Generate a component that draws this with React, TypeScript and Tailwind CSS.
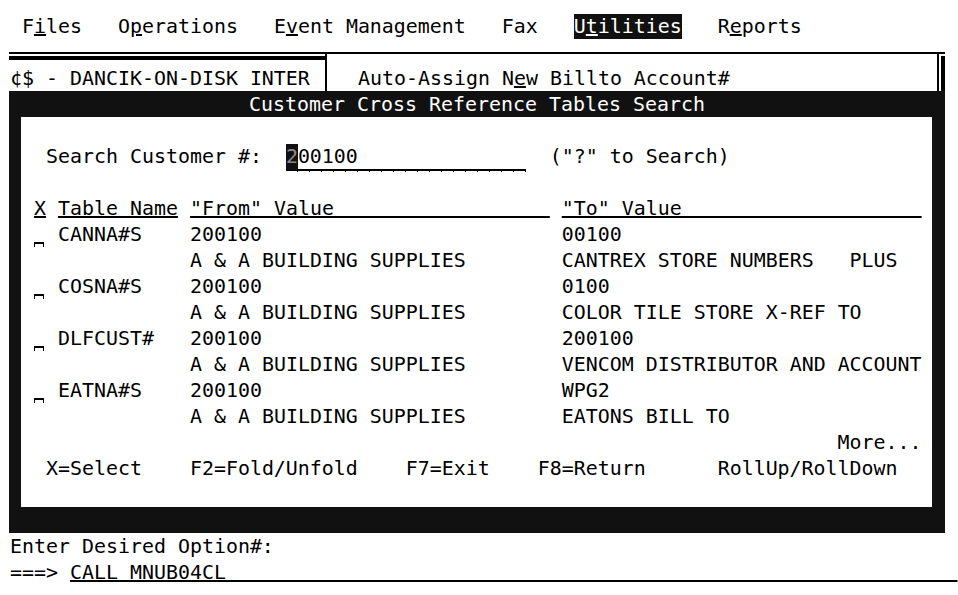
import React from "react"

const mono = "font-['DejaVu_Sans_Mono',monospace] text-[19.93px] leading-[26px] whitespace-pre"

function U({ children }: { children: React.ReactNode }) {
  return <span className="underline decoration-2 underline-offset-[1px]">{children}</span>
}

function Row({ children, className = "" }: { children?: React.ReactNode; className?: string }) {
  return <div className={`h-[26px] pt-[1px] ${className}`}>{children}</div>
}

// one-character input slot: a short line with tick ends
function Slot() {
  return (
    <span className="relative inline-block w-[12px] h-[25px] align-top">
      <span className="absolute left-0 top-[20px] w-[10px] h-[5px] border-t-2 border-x border-black" />
    </span>
  )
}

// search field with underline and tick marks
function SearchField() {
  return (
    <span className="relative inline-block w-[240px] h-[27px] align-top border-b-2 border-black">
      <span className="inline-block bg-[#111] text-[#8c8c8c] h-[26px]">2</span>
      00100
      <span className="absolute left-0 top-full flex">
        {Array.from({ length: 20 }).map((_, i) => (
          <span key={i} className="w-[12px] h-[3px] border-r border-black" />
        ))}
      </span>
    </span>
  )
}

const rows = [
  { tbl: "CANNA#S", from: "200100", to: "00100" },
  { tbl: "", from: "A & A BUILDING SUPPLIES", to: "CANTREX STORE NUMBERS   PLUS" },
  { tbl: "COSNA#S", from: "200100", to: "0100" },
  { tbl: "", from: "A & A BUILDING SUPPLIES", to: "COLOR TILE STORE X-REF TO" },
  { tbl: "DLFCUST#", from: "200100", to: "200100" },
  { tbl: "", from: "A & A BUILDING SUPPLIES", to: "VENCOM DISTRIBUTOR AND ACCOUNT" },
  { tbl: "EATNA#S", from: "200100", to: "WPG2" },
  { tbl: "", from: "A & A BUILDING SUPPLIES", to: "EATONS BILL TO" },
]

export default function App() {
  return (
    <div className={`w-[958px] h-[595px] overflow-hidden bg-white text-black pt-[13px] ${mono}`}>
      {/* Menu bar */}
      <Row className="pl-[10px]">
        {" F"}<U>i</U>{"les   O"}<U>p</U>{"erations   E"}<U>v</U>{"ent Management   Fax   "}
        <span className="inline-block h-[25px] bg-[#111] text-white">
          {"U"}<U>t</U>{"ilities"}
        </span>
        {"   R"}<U>e</U>{"ports"}
      </Row>

      {/* Background window header */}
      <div className="h-[13px]" />
      <div className="ml-[9px] w-[936px] h-[39px] border-t-2 border-black flex">
        <div className="w-[316px]">
          <div className="mt-[2px] h-[4px] bg-black" />
          <div className="mt-[5px] h-[26px] pt-[1px] pl-[1px]">¢$ - DANCIK-ON-DISK INTER</div>
        </div>
        <div className="flex-1 border-l-2 border-black pl-[31px] pt-[12px]">
          {"Auto-Assign N"}<U>e</U>{"w Billto Account#"}
        </div>
        <div className="w-[2px] bg-black" />
        <div className="w-[2px]" />
        <div className="w-[4px] mt-[2px] bg-black" />
      </div>

      {/* Popup window */}
      <div className="ml-[9px] w-[936px] bg-[#111]">
        <Row className="text-white text-center">Customer Cross Reference Tables Search</Row>
        <div className="ml-[12px] w-[911px] h-[390px] bg-white pl-[1px]">
          <Row />
          <Row>
            {"  Search Customer #:  "}
            <SearchField />
            {'  ("?" to Search)'}
          </Row>
          <Row />
          <Row>
            {" "}<U>X</U>{" "}<U>Table Name</U>{" "}<U>{'"From" Value'.padEnd(30, " ")}</U>{" "}
            <U>{'"To" Value'.padEnd(30, " ")}</U>
          </Row>
          {rows.map((r, i) => (
            <Row key={i}>
              {" "}
              {r.tbl ? <Slot /> : " "}
              {" "}
              {r.tbl.padEnd(11, " ")}
              {r.from.padEnd(31, " ")}
              {r.to}
            </Row>
          ))}
          <Row>{" ".repeat(68)}More...</Row>
          <Row>{"  X=Select    F2=Fold/Unfold    F7=Exit    F8=Return      RollUp/RollDown"}</Row>
          <Row />
        </div>
        <Row />
      </div>

      {/* Command line */}
      <Row className="pl-[10px]">Enter Desired Option#:</Row>
      <Row className="pl-[10px]">
        {"===> "}<U>{"CALL MNUB04CL".padEnd(74, " ")}</U>
      </Row>
    </div>
  )
}
